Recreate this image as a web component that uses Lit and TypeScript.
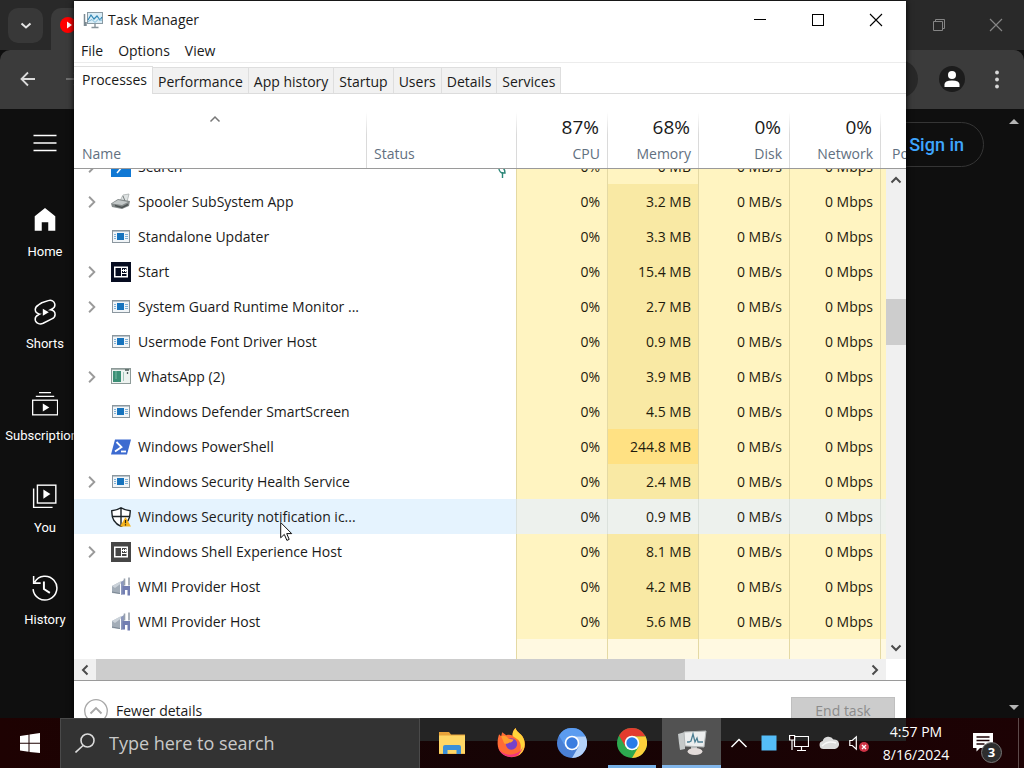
import { LitElement, html, svg, css, TemplateResult } from "lit";
import { customElement } from "lit/decorators.js";
import { classMap } from "lit/directives/class-map.js";

const box = (size: number, body: TemplateResult, view = 20) =>
  html`<svg width=${size} height=${size} viewBox="0 0 ${view} ${view}" fill="none" aria-hidden="true">${body}</svg>`;

/* ---------- process icons, drawn on a 20 unit grid ---------- */
const exe = svg`
  <rect x="1.5" y="3.5" width="17" height="12" fill="#f1f5f8" stroke="#8b979f"/>
  <path d="M2 4.5h16" stroke="#b9c3ca"/>
  <rect x="6" y="6" width="7" height="7" fill="#1673bd"/>
  <path d="M3 7.500h2M3 9.500h2M3 11.500h2M14 7.500h3M14 9.500h3M14 11.500h3" stroke="#7fb0d6"/>`;
const windowGlyph = (bg: string, fg: string) => svg`
  <rect width="20" height="20" fill=${bg}/>
  <rect x="3.750" y="5.250" width="12.500" height="9.500" stroke=${fg} stroke-width="1.5"/>
  <path d="M10.500 5v9.500M12.500 7v3M14.500 7v3M11 8.500h5M11 11.500h5" stroke=${fg}/>`;
const printer = svg`
  <path d="M9 9l3-6 6-1-2 8z" fill="#dfe3e3" stroke="#a9afaf" stroke-width=".8"/>
  <path d="M0 11.500L7 7l12 2-1 5-7 3-10-2z" fill="#858b8b"/>
  <path d="M1 11.500L7 8l10 2-6 3z" fill="#c4c9c9"/>
  <path d="M4 13.500l7 2 6-3" stroke="#4e5454" stroke-width="1.500"/>
  <path d="M12 4l2 5" stroke="#777e7e"/>`;
const whatsapp = svg`
  <rect x=".5" y="1.500" width="19" height="15" fill="#eef3f0" stroke="#8d9a98"/>
  <path d="M1 2.500h18" stroke="#aab5b2"/>
  <rect x="2" y="4" width="8" height="11" fill="#3b8f75"/>
  <path d="M5 4v8" stroke="#79b7a3"/>
  <path d="M12.500 5v9" stroke="#a7c9bd"/>
  <path d="M14 3h4M16.500 5v2" stroke="#4a5a57" stroke-width="1.300"/>`;
const powershell = svg`
  <path d="M4 2.500h16L16 17.500H0z" fill="#3d6bd0"/>
  <path d="M5.500 5l5 5-6.500 4.500" stroke="#fff" stroke-width="1.800"/>
  <path d="M10 14.500h5" stroke="#fff" stroke-width="1.800"/>`;
const shield = svg`
  <path d="M10 .8C7 3 3.500 3.500.800 3.700.500 11 2.500 16.500 10 19.300c7.500-2.800 9.500-8.300 9.200-15.600C16.500 3.500 13 3 10 .8z" fill="#fff" stroke="#1b2227" stroke-width="1.400"/>
  <path d="M10 1v18M1 9.500h18" stroke="#1b2227" stroke-width="1.400"/>
  <path d="M14.500 10l5.500 9.500H9z" fill="#f5b31c"/>
  <path d="M14.500 13v3.300M14.500 17.300v1.200" stroke="#2c2410" stroke-width="1.200"/>`;
const wmi = svg`
  <path d="M1 9l8-4v12l-8-1z" fill="#a3adb8"/>
  <path d="M1 9l9-5 2 1-8 6z" fill="#ccd3da"/>
  <path d="M1 15l8 1.500" stroke="#7d8995"/>
  <path d="M10 5l3-2v14l-3 1z" fill="#8d98bd"/>
  <path d="M13.500 1.500v7M18 .5v8" stroke="#98a1ac" stroke-width="1.600"/>
  <path d="M11.500 9H19v9.500h-2.500V13H14v4.500h-2.500z" fill="#737eb2"/>`;
const searchTile = svg`<rect width="20" height="20" fill="#1078d4"/><path d="M6 16l5-6" stroke="#fff" stroke-width="1.500"/>`;

interface Proc { name: string; icon: TemplateResult; mem: string; open?: boolean; heat?: string; hover?: boolean; leaf?: boolean }
const rows: Proc[] = [
  { name: "Search", icon: searchTile, mem: "0 MB", open: true, leaf: true },
  { name: "Spooler SubSystem App", icon: printer, mem: "3.2 MB", open: true, heat: "warm" },
  { name: "Standalone Updater", icon: exe, mem: "3.3 MB", heat: "warm" },
  { name: "Start", icon: windowGlyph("#060c20", "#fff"), mem: "15.4 MB", open: true, heat: "warm" },
  { name: "System Guard Runtime Monitor ...", icon: exe, mem: "2.7 MB", open: true, heat: "warm" },
  { name: "Usermode Font Driver Host", icon: exe, mem: "0.9 MB", heat: "warm" },
  { name: "WhatsApp (2)", icon: whatsapp, mem: "3.9 MB", open: true, heat: "warm" },
  { name: "Windows Defender SmartScreen", icon: exe, mem: "4.5 MB", heat: "warm" },
  { name: "Windows PowerShell", icon: powershell, mem: "244.8 MB", heat: "hot" },
  { name: "Windows Security Health Service", icon: exe, mem: "2.4 MB", open: true, heat: "warm" },
  { name: "Windows Security notification ic...", icon: shield, mem: "0.9 MB", heat: "warm", hover: true },
  { name: "Windows Shell Experience Host", icon: windowGlyph("#464646", "#fff"), mem: "8.1 MB", open: true, heat: "warm" },
  { name: "WMI Provider Host", icon: wmi, mem: "4.2 MB", heat: "warm" },
  { name: "WMI Provider Host", icon: wmi, mem: "5.6 MB", heat: "warm" },
];
const meters = [["87%", "CPU"], ["68%", "Memory"], ["0%", "Disk"], ["0%", "Network"]];
const tabs = ["Processes", "Performance", "App history", "Startup", "Users", "Details", "Services"];

const chevron = (d: string, cls = "arrow") =>
  html`<svg class=${cls} width="12" height="12" viewBox="0 0 12 12" fill="none" stroke="currentColor" aria-hidden="true"><path d=${d}/></svg>`;
const UP = "M1.500 8.500L6 4l4.500 4.500", DOWN = "M1.500 3.500L6 8l4.500-4.500";
const LEFT = "M8.500 1.500L4 6l4.500 4.500", RIGHT = "M3.500 1.500L8 6l-4.500 4.500";

@customElement("task-manager")
class TaskManager extends LitElement {
  static styles = css`
    :host { display: flex; flex-direction: column; background: #fff; color: #1a1a1a; font: 14px/20px "Open Sans", "Noto Sans", sans-serif; overflow: hidden; }
    * { box-sizing: border-box; }
    button { font: inherit; color: inherit; background: none; border: 0; padding: 0; margin: 0; }
    svg { display: block; }
    .title { display: flex; align-items: center; height: 37px; flex: none; padding-left: 9px; gap: 5px; }
    .title h1 { font: inherit; margin: 0; flex: 1; }
    .caption { display: grid; place-items: center; width: 58px; height: 36px; }
    .captions { display: flex; padding-right: 1px; }
    .menu { display: flex; height: 25px; flex: none; border-bottom: 1px solid #ececec; padding: 2px 7px 0; gap: 15px; }
    .tabs { display: flex; align-items: flex-end; height: 31px; flex: none; border-bottom: 1px solid #dcdcdc; }
    .tab { height: 26px; padding: 2px 5px 0; background: #f1f1f1; border: 1px solid #dedede; border-left: 0; border-bottom: 0; }
    .tab.on { height: 28px; padding: 0 5px 2px 8px; background: #fff; margin-bottom: -1px; }
    .body { flex: 1; min-height: 0; display: grid; grid-template: 75px minmax(0, 1fr) / minmax(0, 1fr) 20px; }
    .scroll { grid-area: 1 / 1 / 3 / 3; overflow: hidden; }
    table { table-layout: fixed; width: 906px; border-collapse: separate; border-spacing: 0; }
    .cname { width: 292px; } .cstatus { width: 150px; } .cnum { width: 91px; } .crest { width: 100px; }
    th { position: sticky; top: 0; z-index: 1; height: 75px; padding: 0 7px 4px 8px; background: #fff; border-bottom: 1px solid #9a9a9a; font-weight: 400; color: #627080; text-align: left; vertical-align: bottom; }
    th + th { background: linear-gradient(#fff, #dadada 40%) left bottom / 1px 56px no-repeat #fff; }
    th.num { text-align: right; }
    .sort { display: block; margin: 0 0 19px 127px; color: #777; stroke-width: 1.500; }
    .pct { display: block; font-size: 19px; line-height: 24px; color: #1a1a1a; margin-bottom: 5px; padding-right: 1px; }
    th.last { padding-left: 12px; white-space: nowrap; }
    td { height: 35px; padding: 0 7px; white-space: nowrap; }
    td.num { text-align: right; background: #fff4c1; border-left: 1px solid #e4d9a4; color: #1f1b0d; }
    td.num.warm { background: #f9e9a4; }
    td.num.hot { background: #ffe183; }
    tr.hover td { background: #e5f3fe; }
    tr.hover td.num { background: #edf1ed; border-left-color: #dbe1dc; }
    tr.blank td.num { background: #fff9e1; }
    .proc { display: grid; grid-template-columns: 18px 20px 1fr; align-items: center; }
    .proc .expand { color: #9a9a9a; justify-self: end; }
    .proc .expand svg { stroke-width: 1.600; width: 14px; height: 14px; }
    .proc .ico { margin-left: 12px; }
    .proc .label { margin-left: 19px; }
    .leaf { display: block; margin: 10px 0 0 auto; }
    .bar { background: #f0f0f0; display: flex; color: #4b4b4b; }
    .bar button { display: grid; place-items: center; flex: none; }
    .bar svg { stroke-width: 2; }
    .vbar { grid-area: 2 / 2; flex-direction: column; }
    .vbar button { height: 22px; }
    .vtrack { flex: 1; display: flex; flex-direction: column; }
    .vtrack i, .htrack i { background: #cdcdcd; }
    .vtrack::before { content: ""; flex: 108; } .vtrack i { flex: 46; } .vtrack::after { content: ""; flex: 292; }
    .hbar { height: 21px; flex: none; margin-right: 20px; }
    .hbar button { width: 22px; }
    .htrack { flex: 1; display: flex; }
    .htrack i { flex: 589; } .htrack::after { content: ""; flex: 179; }
    .foot { height: 61px; flex: none; border-top: 1px solid #9a9a9a; display: flex; align-items: center; justify-content: space-between; padding: 0 11px 0 10px; }
    .fewer { display: flex; align-items: center; gap: 8px; }
    .end { width: 104px; height: 28px; background: #cccccc; border: 1px solid #bfbfbf; color: #8b8b8b; }
  `;
  firstUpdated() {
    this.renderRoot.querySelector(".scroll")!.scrollTop = 20;
  }
  render() {
    return html`
      <header class="title">
        ${box(20, svg`
          <rect x="4.500" y="2.500" width="15" height="11" fill="#d9edf7" stroke="#8a9aa3"/>
          <path d="M5 10l3-5 3 4 3-3 3 4 2-3" stroke="#2f86b5" stroke-width="1.200"/>
          <path d="M5 11.500l4-2 3 3 4-4 3 2" stroke="#7db9d6"/>
          <path d="M12 14v3M8.500 17.500h7" stroke="#87939a" stroke-width="1.400"/>
          <path d="M1.500 4v12M3 12v4" stroke="#7c8a92" stroke-width="1.500"/>`)}
        <h1>Task Manager</h1>
        <div class="captions">
          <button class="caption" aria-label="Minimize">${box(14, svg`<path d="M1 6.500h12" stroke="#000"/>`, 14)}</button>
          <button class="caption" aria-label="Maximize">${box(14, svg`<rect x="1.500" y="1.500" width="11" height="11" stroke="#000"/>`, 14)}</button>
          <button class="caption" aria-label="Close">${box(14, svg`<path d="M1 1l12 12M13 1L1 13" stroke="#000" stroke-width="1.100"/>`, 14)}</button>
        </div>
      </header>
      <nav class="menu"><button>File</button><button>Options</button><button>View</button></nav>
      <div class="tabs" role="tablist">
        ${tabs.map((t, i) => html`<button role="tab" class=${classMap({ tab: true, on: i === 0 })} aria-selected=${i === 0}>${t}</button>`)}
      </div>
      <div class="body">
        <div class="scroll">
          <table>
            <colgroup><col class="cname"><col class="cstatus">${meters.map(() => html`<col class="cnum">`)}<col class="crest"></colgroup>
            <thead><tr>
              <th>${chevron(UP, "sort")}Name</th><th>Status</th>
              ${meters.map(([p, l]) => html`<th class="num"><span class="pct">${p}</span>${l}</th>`)}
              <th class="last">Power</th>
            </tr></thead>
            <tbody>
              ${rows.map((r) => html`<tr class=${classMap({ hover: !!r.hover })}>
                <td><div class="proc">
                  ${r.open ? html`<button class="expand" aria-label="Expand ${r.name}">${chevron(RIGHT)}</button>` : html`<span></span>`}
                  <span class="ico">${box(20, r.icon)}</span><span class="label">${r.name}</span>
                </div></td>
                <td>${r.leaf ? html`<svg class="leaf" width="12" height="14" viewBox="0 0 12 14" fill="none" aria-hidden="true"><path d="M5.500 13V7M8 8H5Q1 6 2 1q6 1 6 7z" stroke="#2c8678" stroke-width="1.400"/></svg>` : ""}</td>
                <td class="num">0%</td>
                <td class="num ${r.heat ?? ""}">${r.mem}</td>
                <td class="num">0 MB/s</td><td class="num">0 Mbps</td><td class="num"></td>
              </tr>`)}
              <tr class="blank"><td></td><td></td>${[0, 1, 2, 3, 4].map(() => html`<td class="num"></td>`)}</tr>
              <tr class="blank"><td></td><td></td>${[0, 1, 2, 3, 4].map(() => html`<td class="num"></td>`)}</tr>
            </tbody>
          </table>
        </div>
        <div class="bar vbar">
          <button aria-label="Scroll up">${chevron(UP)}</button>
          <div class="vtrack"><i></i></div>
          <button aria-label="Scroll down">${chevron(DOWN)}</button>
        </div>
      </div>
      <div class="bar hbar">
        <button aria-label="Scroll left">${chevron(LEFT)}</button>
        <div class="htrack"><i></i></div>
        <button aria-label="Scroll right">${chevron(RIGHT)}</button>
      </div>
      <footer class="foot">
        <button class="fewer">${box(24, svg`<circle cx="12" cy="12" r="11.300" stroke="#a8a8a8" stroke-width="1.300"/><path d="M6.500 14.500L12 9l5.500 5.500" stroke="#a8a8a8" stroke-width="1.800"/>`, 24)}Fewer details</button>
        <button class="end" disabled>End task</button>
      </footer>`;
  }
}

const guide: [string, TemplateResult][] = [
  ["Home", svg`<path d="M12 1L2.500 8.500V22h6.500v-8h6v8h6.500V8.500z" fill="#fff"/>`],
  ["Shorts", svg`<path d="M9 3.500l6-2c3-.8 5.500.5 6 3 .400 2-.500 3.800-2.500 4.700l-1.500.8c2.500.3 4.300 2 4.300 4.200 0 1.800-1 3.300-3 4.200l-8 4c-3 1.300-6 .3-7-2-.8-2.500 0-4.700 2.500-5.700l1.300-.7C4.500 13.500 3 12 3 9.800c0-2 1-3.300 3-4.300z" stroke="#fff" stroke-width="1.400"/><path d="M10 9v6.500l5.500-3.200z" fill="#fff"/>`],
  ["Subscriptions", svg`<path d="M6.500 1.500h11M3.500 5h17" stroke="#fff" stroke-width="1.200"/><rect x=".6" y="8.500" width="23" height="13.500" stroke="#fff" stroke-width="1.200"/><path d="M10 11.500v7.500l6-3.800z" fill="#fff"/>`],
  ["You", svg`<rect x="5" y="2" width="17" height="16.500" stroke="#fff" stroke-width="1.300"/><path d="M1.500 5v17.500H19" stroke="#fff" stroke-width="1.300"/><path d="M10.500 6v8.500l6.500-4.300z" fill="#fff"/>`],
  ["History", svg`<path d="M2.500 6.500A11 11 0 1 1 1 13M1.500 1v6.500H8" stroke="#fff" stroke-width="1.400"/><path d="M11 6v7l5.500 3.500" stroke="#fff" stroke-width="1.800"/>`],
];

@customElement("browser-window")
class BrowserWindow extends LitElement {
  static styles = css`
    :host { display: flex; flex-direction: column; background: #0f0f0f; color: #fff; font: 13px/18px Roboto, "Liberation Sans", sans-serif; }
    * { box-sizing: border-box; }
    button { font: inherit; color: inherit; border: 0; padding: 0; background: none; }
    svg { display: block; }
    .strip { height: 50px; flex: none; display: flex; background: #292929; padding: 8px 0 0 8px; }
    .find { width: 35px; height: 35px; border-radius: 10px; background: #383838; display: grid; place-items: center; margin-right: 8px; }
    .page { width: 260px; border-radius: 10px 10px 0 0; background: #3b3b3b; display: flex; align-items: center; padding: 0 0 8px 8px; }
    .caps { margin-left: auto; display: flex; padding-bottom: 9px; }
    .caps button { width: 57px; display: grid; place-items: center; }
    .bar { height: 59px; flex: none; background: #3b3b3b; display: flex; align-items: center; padding: 0 17px 2px; border-radius: 10px 10px 0 0; }
    .nav { width: 22px; } .fwd { margin: 0 30px 0 24px; }
    .url { flex: 1; min-width: 0; height: 38px; border-radius: 19px; background: #282828; border: 0; }
    .user { width: 26px; height: 26px; border-radius: 50%; background: #1c1c1c; margin: 0 22px 0 21px; display: grid; place-items: center; }
    .site { flex: 1; min-height: 0; display: flex; }
    .mini { width: 90px; flex: none; display: flex; flex-direction: column; align-items: center; }
    .burger { height: 68px; flex: none; display: grid; place-items: center; }
    .item { height: 92px; flex: none; display: flex; flex-direction: column; align-items: center; gap: 10px; padding-top: 30px; color: #fff; text-decoration: none; }
    .main { flex: 1; display: flex; justify-content: flex-end; align-items: flex-start; padding: 13px 19px; }
    .signin { height: 45px; border: 1px solid #353535; border-radius: 23px; color: #3ea6ff; font-size: 18px; font-weight: 500; line-height: 43px; padding: 0 19px 0 48px; text-decoration: none; }
    .side { width: 21px; flex: none; display: flex; flex-direction: column; justify-content: space-between; align-items: center; padding: 9px 0 4px; }
  `;
  render() {
    return html`
      <div class="strip">
        <button class="find" aria-label="Search tabs">${box(14, svg`<path d="M2.500 4.500L7 8.500l4.500-4" stroke="#e6e6e6" stroke-width="2"/>`, 14)}</button>
        <div class="page">${box(18, svg`<circle cx="9" cy="9" r="8" fill="#f00"/><path d="M8 5.500v7l5-3.500z" fill="#fff"/>`, 18)}</div>
        <div class="caps">
          <button aria-label="Restore">${box(14, svg`<path d="M1.500 3.500h9v9h-9zM3.500 3V1.500h9v9H11" stroke="#858585"/>`, 14)}</button>
          <button aria-label="Close">${box(14, svg`<path d="M1 1l12 12M13 1L1 13" stroke="#858585" stroke-width="1.200"/>`, 14)}</button>
        </div>
      </div>
      <div class="bar">
        <button class="nav" aria-label="Back">${box(22, svg`<path d="M18 11H4.500M11 4.500L4.500 11l6.500 6.500" stroke="#dadada" stroke-width="1.800"/>`, 22)}</button>
        <button class="nav fwd" aria-label="Forward">${box(22, svg`<path d="M3 11h14M11 4.500l6.500 6.500-6.500 6.500" stroke="#6d6d6d" stroke-width="1.800"/>`, 22)}</button>
        <input class="url" aria-label="Address">
        <button class="user" aria-label="Profile">${box(18, svg`<circle cx="9" cy="5" r="4" fill="#fff"/><path d="M1.500 17v-2.500q0-4 7.500-4t7.500 4V17z" fill="#fff"/>`, 18)}</button>
        <button aria-label="Menu">${box(20, svg`<g fill="#d8d8d8"><circle cx="10" cy="3.500" r="1.900"/><circle cx="10" cy="10.500" r="1.900"/><circle cx="10" cy="17.500" r="1.900"/></g>`)}</button>
      </div>
      <div class="site">
        <nav class="mini">
          <button class="burger" aria-label="Guide">${box(24, svg`<path d="M.5 4.500h23M.5 12h23M.5 19.500h23" stroke="#fff" stroke-width="1.300"/>`, 24)}</button>
          ${guide.map(([t, i]) => html`<a class="item" href="#">${box(26, i, 24)}<span>${t}</span></a>`)}
        </nav>
        <div class="main"><a class="signin" href="#">Sign in</a></div>
        <div class="side">
          ${box(10, svg`<path d="M0 6l5-5 5 5z" fill="#b5b5b5"/>`, 10)}
          ${box(10, svg`<path d="M0 1l5 5 5-5z" fill="#b5b5b5"/>`, 10)}
        </div>
      </div>`;
  }
}

const explorer = svg`
  <path d="M1 3h10l2 2.500h14V25H1z" fill="#e8a33a"/><path d="M1 6.500h26v18H1z" fill="#ffd766"/>
  <path d="M5 25v-7q0-2 2-2h14q2 0 2 2v7h-4.500v-4h-9v4z" fill="#3b8fd8"/>`;
const firefox = svg`
  <path d="M2 6l2 2 1-4 4 3c2-.7 4-.5 6 .2 0-3 1-5.200 3-7.200 1 4 4 4.500 6.500 8C29 15 27 23 21 26.500 12 31 1 26 .6 15.500.5 12 1 9 2 6z" fill="#ff6a35"/>
  <path d="M18 0c1 4 4 4.500 6.500 8 4.500 7 2 15-3.500 18.500 3-6 3-13-2-16-2-1.500-3.500-2-4-3.500 0-3 1-5 3-7z" fill="#ffd43a"/>
  <path d="M1 18c2 7 10 10 19 6 2-1 4-3 5-6-1 7-7 10.500-12.500 10S2.500 24.500 1 18z" fill="#f0357f"/>
  <circle cx="14" cy="15.500" r="5.500" fill="#7542c9"/>
  <path d="M4 8q5-1.500 7 2.500l5 .5q-1 3-4 3-2 2-5 1z" fill="#ffa02e"/>`;
const rings = (a: string, b: string, c: string, core: string) => svg`
  <circle cx="15" cy="15" r="15" fill=${b}/>
  <path d="M2 7.500A15 15 0 0 1 28 7.500L28 8.500H15L8.500 18.700z" fill=${a}/>
  <path d="M28 7.500A15 15 0 0 1 15 30L21.500 18.700 15 8.500H28z" fill=${c}/>
  <circle cx="15" cy="15" r="7.300" fill="#fff"/><circle cx="15" cy="15" r="5.700" fill=${core}/>`;
const tmIcon = svg`
  <path d="M1 6l7-2v17l-5 1-1-7z" fill="#c5c9c9"/>
  <path d="M7 4l22-1-2 16-19-1z" fill="#eceeee" stroke="#b3b7b7"/>
  <path d="M10 14h2l2-1 2-7 2 8 2-4 1 4h5" stroke="#4d7f93" stroke-width="1.300"/>
  <path d="M14 18h6v4h-6z" fill="#b9bcbc"/><ellipse cx="18" cy="23.500" rx="7.500" ry="3.500" fill="#e3dcda"/>`;

@customElement("task-bar")
class TaskBar extends LitElement {
  static styles = css`
    :host { display: flex; color: #fff; font: 14px/22px "Open Sans", "Noto Sans", sans-serif; background: linear-gradient(#242424, #242424) 74px 0 / calc(100% - 192px) 23px no-repeat, linear-gradient(90deg, #1e0202, #160405 50%, #1d0204); }
    * { box-sizing: border-box; }
    button { font: inherit; color: inherit; border: 0; padding: 0; background: none; display: grid; place-items: center; }
    svg { display: block; }
    .start { width: 60px; }
    .find { width: 360px; display: flex; align-items: center; gap: 14px; padding: 0 15px 2px 14px; background: #333; border: 1px solid #4a4a4a; border-bottom: 0; }
    .find input { flex: 1; min-width: 0; border: 0; background: none; padding: 0; outline: 0; font: 18px/24px "Open Sans", "Noto Sans", sans-serif; color: #fff; }
    .find input::placeholder { color: #c9c9c9; opacity: 1; }
    .apps { display: flex; padding-left: 2px; }
    .app { width: 59px; margin-right: 1px; border: solid transparent; border-width: 3px 0; }
    .app.run { background: linear-gradient(#76b0e6, #76b0e6) center bottom / 48px 3px no-repeat border-box; }
    .app.on { background: #525252; border-bottom-color: #82b6ea; border-top-color: #525252; }
    .tray { margin-left: auto; display: flex; }
    .tray .cell { width: 30px; }
    .clock { width: 84px; display: flex; flex-direction: column; align-items: center; justify-content: center; line-height: 23px; }
    .note { position: relative; width: 61px; border-right: 1px solid #5d4a4a; margin-right: 5px; padding-right: 11px; }
    .count { position: absolute; left: 23px; bottom: 5px; width: 21px; height: 21px; border-radius: 50%; background: #2e2e2e; border: 1px solid #777; font-size: 13px; line-height: 19px; font-weight: 700; }
  `;
  render() {
    return html`
      <button class="start" aria-label="Start">${box(20, svg`<path d="M0 3l8.500-1.200v8H0zM9.500 1.600L20 0v9.800H9.500zM0 10.800h8.500v8L0 17.500zM9.500 10.800H20V20L9.500 18.900z" fill="#fff"/>`)}</button>
      <label class="find">
        ${box(20, svg`<circle cx="12.500" cy="7.500" r="6.500" stroke="#dcdcdc" stroke-width="1.600"/><path d="M8 12.500L.5 19.500" stroke="#dcdcdc" stroke-width="1.600"/>`)}
        <input type="text" aria-label="Search" placeholder="Type here to search">
      </label>
      <div class="apps">
        <button class="app" aria-label="File Explorer">${box(28, explorer, 28)}</button>
        <button class="app" aria-label="Firefox">${box(30, firefox, 29)}</button>
        <button class="app" aria-label="Chromium">${box(30, rings("#5b9cf0", "#4a80d6", "#b4d2fa", "#3a7de0"), 30)}</button>
        <button class="app run" aria-label="Chrome">${box(30, rings("#e33b2e", "#2da94f", "#fdd03b", "#2a7be8"), 30)}</button>
        <button class="app on" aria-label="Task Manager">${box(30, tmIcon, 30)}</button>
      </div>
      <div class="tray">
        <button class="cell" aria-label="Show hidden icons">${box(18, svg`<path d="M1.500 13L9 5.500l7.500 7.500" stroke="#fff" stroke-width="1.500"/>`, 18)}</button>
        <button class="cell" aria-label="App">${box(16, svg`<rect x=".5" y=".5" width="15" height="15" fill="#55bdf8"/>`, 16)}</button>
        <button class="cell" aria-label="Network">${box(20, svg`<path d="M5.500 3.500h14v10h-14zM12.500 14v3M8 17.500h9" stroke="#fff" stroke-width="1.200"/><path d="M.6 2.500h5v4.500h-5zM3 7v10" fill="#160405" stroke="#fff" stroke-width="1.200"/>`)}</button>
        <button class="cell" aria-label="OneDrive">${box(20, svg`<path d="M4.500 16a4 4 0 0 1-.8-7.900A6 6 0 0 1 14.500 6.500a4.600 4.600 0 0 1 1.500 9.500z" fill="#dcdcdc"/><path d="M3 13q6-6 14-3" stroke="#f8f8f8" stroke-width="1.500"/>`)}</button>
        <button class="cell" aria-label="Volume">${box(20, svg`<path d="M.8 7.500h2.500l4-3.700v12.400l-4-3.700H.8z" stroke="#fff" stroke-width="1.200"/><circle cx="15" cy="14" r="5" fill="#cf3346"/><path d="M13 12l4 4M17 12l-4 4" stroke="#fff" stroke-width="1.300"/>`)}</button>
        <div class="clock"><span>4:57 PM</span><span>8/16/2024</span></div>
        <button class="note" aria-label="Notifications">${box(22, svg`<path d="M1 1h20v15H8l-3.500 3.500V16H1z" fill="#fff"/><path d="M4.500 5h13M4.500 8.500h13M4.500 12h8" stroke="#1d0204" stroke-width="1.400"/>`, 22)}<span class="count">3</span></button>
      </div>`;
  }
}

@customElement("app-root")
class AppRoot extends LitElement {
  static styles = css`
    :host { display: grid; grid-template-rows: minmax(0, 1fr) 50px; height: 100vh; background: #1e0202; }
    .desktop { position: relative; overflow: hidden; display: grid; }
    .top { position: absolute; left: 74px; right: 118px; top: 1px; bottom: -23px; box-shadow: 0 0 6px #000; }
    .cursor { position: absolute; left: 280px; top: 521px; }
  `;
  render() {
    return html`
      <div class="desktop">
        <browser-window></browser-window>
        <task-manager class="top"></task-manager>
        <svg class="cursor" width="13" height="21" viewBox="0 0 13 21" aria-hidden="true"><path d="M.7 1.500v15.300l3.600-3.400 2.600 6 2.300-1-2.500-5.800h5z" fill="#fff" stroke="#111"/></svg>
      </div>
      <task-bar></task-bar>`;
  }
}
